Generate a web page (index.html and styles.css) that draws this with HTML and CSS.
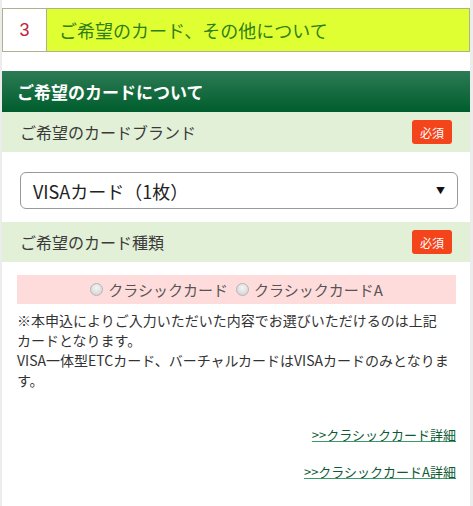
FILE: index.html
```html
<!DOCTYPE html>
<html lang="ja">
<head>
<meta charset="utf-8">
<link rel="stylesheet" href="styles.css">
</head>
<body>
<div class="page">
  <div class="step">
    <div class="step-num">3</div>
    <div class="step-title">ご希望のカード、その他について</div>
  </div>
  <div class="section-head">ご希望のカードについて</div>
  <div class="field-head">
    <span>ご希望のカードブランド</span>
    <span class="badge">必須</span>
  </div>
  <div class="select-wrap">
    <div class="select">
      <span>VISAカード（1枚）</span>
      <span class="arrow">▼</span>
    </div>
  </div>
  <div class="field-head">
    <span>ご希望のカード種類</span>
    <span class="badge">必須</span>
  </div>
  <div class="radios">
    <label class="radio"><span class="dot"></span>クラシックカード</label>
    <label class="radio"><span class="dot"></span>クラシックカードA</label>
  </div>
  <p class="note">※本申込によりご入力いただいた内容でお選びいただけるのは上記カードとなります。<br>VISA一体型ETCカード、バーチャルカードはVISAカードのみとなります。</p>
  <div class="links">
    <a href="#" class="link">&gt;&gt;クラシックカード詳細</a>
    <a href="#" class="link">&gt;&gt;クラシックカードA詳細</a>
  </div>
</div>
</body>
</html>
```
FILE: styles.css
```css
html, body {
  margin: 0;
  padding: 0;
  background: #ececec;
}
body {
  font-family: "Noto Sans CJK JP", "Liberation Sans", sans-serif;
  color: #333;
}
.page {
  margin: 0 3px 0 2px;
  background: #fff;
  min-height: 506px;
  padding-top: 8px;
  box-sizing: border-box;
}
.step {
  display: flex;
  height: 44px;
  border: 1px solid #b0b08c;
  box-sizing: border-box;
}
.step-num {
  width: 43px;
  background: #fff;
  border-right: 1px solid #b0b08c;
  display: flex;
  align-items: center;
  justify-content: center;
  color: #c0283c;
  font-size: 18px;
  font-family: "Liberation Sans", sans-serif;
}
.step-title {
  flex: 1;
  background: #e0ff33;
  color: #2f7f18;
  font-size: 18px;
  display: flex;
  align-items: center;
  padding-left: 12px;
}
.section-head {
  margin-top: 19px;
  height: 41px;
  background: linear-gradient(#2d7b55, #005d2c);
  color: #fff;
  font-size: 17px;
  font-weight: bold;
  display: flex;
  align-items: center;
  padding-left: 15px;
}
.field-head {
  height: 40px;
  background: #e2f0d8;
  display: flex;
  align-items: center;
  justify-content: space-between;
  padding: 0 18px 0 18px;
  font-size: 16px;
  color: #3a3a3a;
}
.badge {
  width: 40px;
  height: 24px;
  background: #f4441c;
  border-radius: 3px;
  color: #fff;
  font-size: 12px;
  display: flex;
  align-items: center;
  justify-content: center;
}
.select-wrap {
  padding: 20px 12px 13px 18px;
}
.select {
  height: 37px;
  border: 1px solid #999;
  border-radius: 6px;
  box-sizing: border-box;
  display: flex;
  align-items: center;
  justify-content: space-between;
  padding: 0 12px 0 12px;
  font-size: 18px;
  color: #222;
}
.arrow {
  font-size: 9px;
  color: #111;
}
.radios {
  margin: 13px 14px 0 15px;
  height: 29px;
  background: #ffdcdc;
  display: flex;
  align-items: center;
  justify-content: center;
  gap: 8px;
  font-size: 15px;
  color: #555;
}
.radio {
  display: flex;
  align-items: center;
}
.dot {
  width: 11px;
  height: 11px;
  border-radius: 50%;
  border: 1px solid #b4b4b4;
  background: radial-gradient(circle at 50% 35%, #f4f4f4, #cfcfcf);
  margin-right: 5px;
}
.note {
  margin: 6px 21px 0 15px;
  font-size: 14px;
  line-height: 20px;
  color: #333;
}
.links {
  margin: 34px 14px 0 0;
  display: flex;
  flex-direction: column;
  align-items: flex-end;
  gap: 16px;
}
.link {
  font-size: 13px;
  line-height: 21px;
  color: #0f5a34;
  text-decoration: underline;
  text-decoration-color: #3a9a6a;
}
```
